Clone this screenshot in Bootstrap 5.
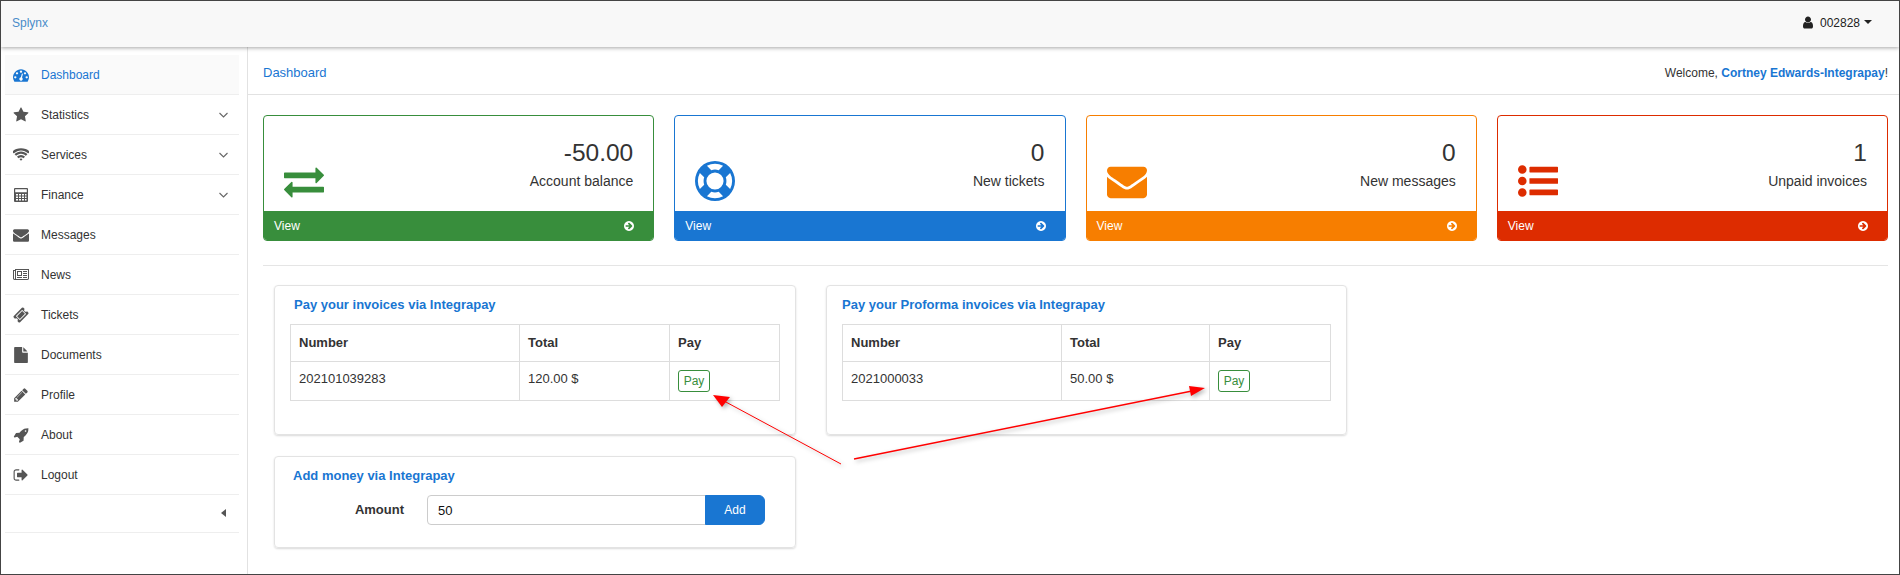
<!DOCTYPE html>
<html lang="en">
<head>
    <meta charset="UTF-8">
    <meta name="viewport" content="width=device-width, initial-scale=1.0">
    <title>Splynx</title>
    <link href="https://cdn.jsdelivr.net/npm/bootstrap@5.3.2/dist/css/bootstrap.min.css" rel="stylesheet">
    <style>
        body {
            font-family: "Liberation Sans", Arial, sans-serif;
            font-size: 13px;
            color: #333;
            background: #fff;
            overflow: hidden;
        }
        a { text-decoration: none; }
        .page-frame {
            position: relative;
            height: 575px;
            border: 1px solid #444;
            overflow: hidden;
        }
        .top-bar {
            height: 46px;
            background: #f8f8f8;
            box-shadow: 0 1px 4px rgba(0,0,0,.35);
            padding: 0 27px 3px 11px;
            position: relative;
            z-index: 2;
        }
        .brand-link { color: #4a8cc9; font-size: 12px; }
        .user-menu { color: #222; font-size: 12px; gap: 7px; }
        .user-menu svg { width: 11px; height: 13px; fill: #222; }
        .user-caret {
            border-left: 4px solid transparent;
            border-right: 4px solid transparent;
            border-top: 4px solid #222;
            margin-left: -3px;
            margin-top: -1px;
        }
        .side-bar {
            width: 247px;
            flex: none;
            border-right: 1px solid #e2e2e2;
            padding: 8px 8px 0 4px;
        }
        .side-link {
            height: 40px;
            border-bottom: 1px solid #eee;
            color: #333;
            font-size: 12px;
            padding: 1px 0 0 8px;
        }
        .side-link.is-active { background: #fafafa; color: #1976d2; }
        .side-link .side-icon { width: 16px; height: 16px; fill: #555; margin-right: 12px; flex: none; }
        .side-link.is-active .side-icon { fill: #1976d2; }
        .side-chevron { width: 9px; height: 6px; margin-left: auto; margin-right: 11px; fill: none; stroke: #666; stroke-width: 1.1; }
        .side-collapse { height: 38px; border-bottom: 1px solid #eee; padding-right: 13px; }
        .side-collapse-caret {
            border-top: 4px solid transparent;
            border-bottom: 4px solid transparent;
            border-right: 5px solid #555;
            margin-top: -1px;
        }
        .main-area { flex: 1; min-width: 0; }
        .crumb-bar {
            height: 48px;
            border-bottom: 1px solid #e2e2e2;
            padding: 4px 11px 0 15px;
        }
        .crumb-link { color: #1976d2; font-size: 13px; }
        .welcome-text { font-size: 12px; color: #333; }
        .welcome-text a { color: #1976d2; font-weight: 700; }
        .main-body { padding: 20px 11px 0 15px; }
        .stat-grid { display: grid; grid-template-columns: repeat(4, 1fr); gap: 20px; }
        .stat-box { height: 126px; border-radius: 4px; border: 1px solid; overflow: hidden; }
        .stat-top { height: 95px; padding: 0 20px 10px 20px; }
        .stat-icon { width: 40px; height: 40px; fill: currentColor; }
        .stat-number { font-size: 24.5px; line-height: 28px; color: #333; }
        .stat-label { font-size: 14px; line-height: 20px; margin-top: 4px; color: #333; margin-bottom: 10px; }
        .stat-foot { height: 30px; color: #fff; padding: 0 20px 0 11px; font-size: 12px; margin: 0 -1px; }
        .stat-foot svg { width: 10px; height: 12px; fill: #fff; }
        .stat-green { border-color: #388e3c; color: #388e3c; }
        .stat-green .stat-foot { background: #388e3c; }
        .stat-blue { border-color: #1976d2; color: #1976d2; }
        .stat-blue .stat-foot { background: #1976d2; }
        .stat-orange { border-color: #f77e00; color: #f77e00; }
        .stat-orange .stat-foot { background: #f77e00; }
        .stat-red { border-color: #dd2c00; color: #dd2c00; }
        .stat-red .stat-foot { background: #dd2c00; }
        .divider-line { height: 1px; background: #e5e5e5; margin: 24px 0 19px; }
        .panel-row { padding-left: 11px; gap: 30px; }
        .panel-col-left { width: 522px; flex: none; gap: 21px; }
        .panel-col-right { width: 521px; flex: none; }
        .pay-panel {
            border: 1px solid #e3e3e3;
            border-radius: 4px;
            box-shadow: 0 1px 2px rgba(0,0,0,.15);
            padding: 10px 15px 0;
        }
        .pay-panel.tall-panel { height: 150px; }
        .pay-panel.short-panel { height: 92px; }
        .panel-title { color: #1976d2; font-weight: 700; font-size: 13px; line-height: 18px; margin-bottom: 10px; }
        .panel-title.title-inset { padding-left: 4px; }
        .panel-title.title-inset-small { padding-left: 3px; }
        .pay-table { table-layout: fixed; margin: 0; color: #333; font-size: 13px; --bs-table-border-color: #ddd; border-color: #ddd; }
        .pay-table th { font-weight: 700; padding: 9px 8px; height: 36px; line-height: 18px; }
        .pay-table td { padding: 8px; height: 39px; line-height: 18px; }
        .invoice-table { width: 490px; }
        .invoice-table th:nth-child(1) { width: 229px; }
        .invoice-table th:nth-child(2) { width: 150px; }
        .proforma-table { width: 489px; }
        .proforma-table th:nth-child(1) { width: 219px; }
        .proforma-table th:nth-child(2) { width: 148px; }
        .btn-pay {
            --bs-btn-color: #388e3c;
            --bs-btn-border-color: #388e3c;
            --bs-btn-hover-color: #fff;
            --bs-btn-hover-bg: #388e3c;
            --bs-btn-padding-x: 0;
            --bs-btn-padding-y: 2px;
            --bs-btn-font-size: 12px;
            --bs-btn-border-radius: 3px;
            --bs-btn-line-height: 16px;
            display: block;
            width: 32px;
        }
        .amount-label { width: 114px; text-align: right; font-weight: 700; font-size: 13px; color: #333; margin-right: 23px; }
        .amount-group { width: 338px; }
        .amount-group .form-control { height: 30px; font-size: 13px; color: #111; border-color: #ccc; padding: 0 10px; border-radius: 4px 0 0 4px; }
        .btn-add {
            --bs-btn-color: #fff;
            --bs-btn-bg: #1976d2;
            --bs-btn-border-color: #1976d2;
            --bs-btn-hover-color: #fff;
            --bs-btn-hover-bg: #1565c0;
            --bs-btn-font-size: 12px;
            width: 60px;
            height: 30px;
            padding: 0;
        }
        .arrow-layer {
            position: absolute;
            left: -1px;
            top: -1px;
            width: 1900px;
            height: 575px;
            z-index: 5;
            pointer-events: none;
            filter: drop-shadow(2px 2px 2px rgba(0,0,0,.3));
        }
    </style>
</head>
<body>
    <div class="page-frame d-flex flex-column">
        <div class="top-bar d-flex align-items-center justify-content-between">
            <a class="brand-link" href="#">Splynx</a>
            <a class="user-menu d-flex align-items-center" href="#">
                <svg viewBox="128 128 1408 1536"><path d="M1536 1399q0 109-62.5 187t-150.5 78h-854q-88 0-150.5-78t-62.5-187q0-85 8.5-160.5t31.5-152 58.5-131 94-89 134.5-34.5q131 128 313 128t313-128q76 0 134.5 34.5t94 89 58.5 131 31.5 152 8.5 160.5zm-256-887q0 159-112.5 271.5t-271.5 112.5-271.5-112.5-112.5-271.5 112.5-271.5 271.5-112.5 271.5 112.5 112.5 271.5z"/></svg>
                <span>002828</span>
                <span class="user-caret"></span>
            </a>
        </div>

        <div class="d-flex flex-grow-1">
            <div class="side-bar">
                <a class="side-link is-active d-flex align-items-center" href="#">
                    <svg class="side-icon" viewBox="0 0 1792 1792"><path d="M384 1152q0-53-37.5-90.5t-90.5-37.5-90.5 37.5-37.5 90.5 37.5 90.5 90.5 37.5 90.5-37.5 37.5-90.5zm192-448q0-53-37.5-90.5t-90.5-37.5-90.5 37.5-37.5 90.5 37.5 90.5 90.5 37.5 90.5-37.5 37.5-90.5zm428 481l101-382q6-26-7.5-48.5t-38.5-29.5-48 6.5-30 39.5l-101 382q-60 5-107 43.5t-63 98.5q-20 77 20 146t117 89 146-20 89-117q16-60-6-117t-72-91zm660-33q0-53-37.5-90.5t-90.5-37.5-90.5 37.5-37.5 90.5 37.5 90.5 90.5 37.5 90.5-37.5 37.5-90.5zm-640-640q0-53-37.5-90.5t-90.5-37.5-90.5 37.5-37.5 90.5 37.5 90.5 90.5 37.5 90.5-37.5 37.5-90.5zm448 192q0-53-37.5-90.5t-90.5-37.5-90.5 37.5-37.5 90.5 37.5 90.5 90.5 37.5 90.5-37.5 37.5-90.5zm320 448q0 261-141 483-19 29-54 29h-1402q-35 0-54-29-141-221-141-483 0-182 71-348t191-286 286-191 348-71 348 71 286 191 191 286 71 348z"/></svg>
                    Dashboard
                </a>
                <a class="side-link d-flex align-items-center" href="#">
                    <svg class="side-icon" viewBox="0 0 1792 1792"><path d="M1728 647q0 22-26 48l-363 354 86 500q1 7 1 20 0 21-10.5 35.5t-30.5 14.5q-19 0-40-12l-449-236-449 236q-22 12-40 12-21 0-31.5-14.5t-10.5-35.5q0-6 2-20l86-500-364-354q-25-27-25-48 0-37 56-46l502-73 225-455q19-41 49-41t49 41l225 455 502 73q56 9 56 46z"/></svg>
                    Statistics
                    <svg class="side-chevron" viewBox="0 0 9 6"><path d="M.5 1l4 4 4-4"/></svg>
                </a>
                <a class="side-link d-flex align-items-center" href="#">
                    <svg class="side-icon" viewBox="0 0 1792 1792"><path d="M896 1523q-20 0-93-73.5t-73-93.5q0-32 62.5-54t103.5-22 103.5 22 62.5 54q0 20-73 93.5t-93 73.5zm270-271q-2 0-40-25t-101.5-50-128.5-25-128.5 25-101 50-40.5 25q-18 0-93.5-75t-75.5-93q0-13 10-23 78-77 196-121t233-44 233 44 196 121q10 10 10 23 0 18-75.5 93t-93.5 75zm273-272q-11 0-23-8-136-105-252-154.5t-268-49.5q-85 0-170.5 22t-149 53-113.5 62-79 53-31 22q-17 0-92-75t-75-93q0-12 10-22 132-132 320-205t380-73 380 73 320 205q10 10 10 22 0 18-75 93t-92 75zm271-271q-11 0-22-9-179-157-371.5-236.5t-420.5-79.5-420.5 79.5-371.5 236.5q-11 9-22 9-17 0-92.5-75t-75.5-93q0-13 10-23 187-186 445-288t527-102 527 102 445 288q10 10 10 23 0 18-75.5 93t-92.5 75z"/></svg>
                    Services
                    <svg class="side-chevron" viewBox="0 0 9 6"><path d="M.5 1l4 4 4-4"/></svg>
                </a>
                <a class="side-link d-flex align-items-center" href="#">
                    <svg class="side-icon" viewBox="0 0 16 16"><path fill-rule="evenodd" d="M2 1h12a1 1 0 0 1 1 1v12a1 1 0 0 1-1 1H2a1 1 0 0 1-1-1V2a1 1 0 0 1 1-1zm.2 1.2v3h11.600v-3H2.200zM3 7v1.600h2V7H3zm3 0v1.600h2V7H6zm3 0v1.600h2V7H9zm3 0v1.600h1.500V7H12zM3 9.500v1.600h2V9.500H3zm3 0v1.600h2V9.500H6zm3 0v1.600h2V9.500H9zm3 0v1.600h1.500V9.500H12zM3 12v1.600h2V12H3zm3 0v1.600h2V12H6zm3 0v1.600h2V12H9zm3 0v1.600h1.500V12H12z"/></svg>
                    Finance
                    <svg class="side-chevron" viewBox="0 0 9 6"><path d="M.5 1l4 4 4-4"/></svg>
                </a>
                <a class="side-link d-flex align-items-center" href="#">
                    <svg class="side-icon" viewBox="0 0 1792 1792"><path d="M1792 710v794q0 66-47 113t-113 47h-1472q-66 0-113-47t-47-113v-794q44 49 101 87 362 246 497 345 57 42 92.5 65.5t94.5 48 110 24.5h2q51 0 110-24.5t94.5-48 92.5-65.5q170-123 498-345 57-39 100-87zm0-294q0 79-49 151t-122 123q-376 261-468 325-10 7-42.5 30.5t-54 38-52 32.5-57.5 27-50 9h-2q-23 0-50-9t-57.5-27-52-32.5-54-38-42.5-30.5q-91-64-262-182.5t-205-142.5q-62-42-117-115.5t-55-136.5q0-78 41.5-130t118.5-52h1472q65 0 112.5 47t47.5 113z"/></svg>
                    Messages
                </a>
                <a class="side-link d-flex align-items-center" href="#">
                    <svg class="side-icon" viewBox="0 0 2048 1792"><path d="M1024 512h-384v384h384v-384zm128 640v128h-640v-128h640zm0-768v640h-640v-640h640zm640 768v128h-512v-128h512zm0-256v128h-512v-128h512zm0-256v128h-512v-128h512zm0-256v128h-512v-128h512zm-1536 960v-960h-128v960q0 26 19 45t45 19 45-19 19-45zm1664 0v-1088h-1536v1088q0 33-11 64h1451q40 0 68-28t28-36zm128-1216v1216q0 80-56 136t-136 56h-1664q-80 0-136-56t-56-136v-1088h256v-128h1792z"/></svg>
                    News
                </a>
                <a class="side-link d-flex align-items-center" href="#">
                    <svg class="side-icon" viewBox="0 0 1792 1792"><path d="M1024 452l316 316-572 572-316-316zm-211 979l618-618q19-19 19-45t-19-45l-362-362q-18-18-45-18t-45 18l-618 618q-19 19-19 45t19 45l362 362q18 18 45 18t45-18zm889-637l-907 908q-37 37-90.500 37t-90.500-37l-126-126q56-56 56-136t-56-136-136-56-136 56l-125-126q-37-37-37-90.500t37-90.500l907-906q37-37 90.500-37t90.500 37l125 125q-56 56-56 136t56 136 136 56 136-56l126 125q37 37 37 90.500t-37 90.500z"/></svg>
                    Tickets
                </a>
                <a class="side-link d-flex align-items-center" href="#">
                    <svg class="side-icon" viewBox="0 0 1792 1792"><path d="M1152 512v-472q22 14 36 28l408 408q14 14 28 36h-472zm-128 32q0 40 28 68t68 28h544v1056q0 40-28 68t-68 28h-1344q-40 0-68-28t-28-68v-1600q0-40 28-68t68-28h800v544z"/></svg>
                    Documents
                </a>
                <a class="side-link d-flex align-items-center" href="#">
                    <svg class="side-icon" viewBox="0 0 1792 1792"><path d="M491 1536l91-91-235-235-91 91v107h128v128h107zm523-928q0-22-22-22-10 0-17 7l-542 542q-7 7-7 17 0 22 22 22 10 0 17-7l542-542q7-7 7-17zm-54-192l416 416-832 832h-416v-416zm683 96q0 53-37 90l-166 166-416-416 166-165q36-38 90-38 53 0 91 38l235 234q37 39 37 91z"/></svg>
                    Profile
                </a>
                <a class="side-link d-flex align-items-center" href="#">
                    <svg class="side-icon" viewBox="0 0 1792 1792"><path d="M1504 448q0-40-28-68t-68-28-68 28-28 68 28 68 68 28 68-28 28-68zm224-288q0 249-75.500 430.500t-253.500 360.500q-81 80-195 176l-20 379q-2 16-16 26l-384 224q-7 4-16 4-12 0-23-9l-64-64q-13-14-8-32l85-276-281-281-276 85q-3 1-9 1-14 0-23-9l-64-64q-17-19-5-39l224-384q10-14 26-16l379-20q96-114 176-195 188-187 358-258t431-71q14 0 24 9.500t10 22.500z"/></svg>
                    About
                </a>
                <a class="side-link d-flex align-items-center" href="#">
                    <svg class="side-icon" viewBox="0 0 1792 1792"><path d="M704 1440q0 4 1 20t.5 26.500-3 23.500-10 19.500-20.500 6.500h-320q-119 0-203.500-84.500t-84.500-203.500v-704q0-119 84.500-203.500t203.500-84.500h320q13 0 22.500 9.500t9.500 22.500q0 4 1 20t.5 26.500-3 23.500-10 19.500-20.500 6.500h-320q-66 0-113 47t-47 113v704q0 66 47 113t113 47h312l11.500 1 11.500 3 8 5.500 7 9 2 13.500zm928-544q0 26-19 45l-544 544q-19 19-45 19t-45-19-19-45v-288h-448q-26 0-45-19t-19-45v-384q0-26 19-45t45-19h448v-288q0-26 19-45t45-19 45 19l544 544q19 19 19 45z"/></svg>
                    Logout
                </a>
                <div class="side-collapse d-flex align-items-center justify-content-end">
                    <span class="side-collapse-caret"></span>
                </div>
            </div>

            <div class="main-area">
                <div class="crumb-bar d-flex align-items-center justify-content-between">
                    <a class="crumb-link" href="#">Dashboard</a>
                    <div class="welcome-text">Welcome, <a href="#">Cortney Edwards-Integrapay</a>!</div>
                </div>

                <div class="main-body">
                    <div class="stat-grid">
                        <div class="stat-box stat-green">
                            <div class="stat-top d-flex align-items-end justify-content-between">
                                <svg class="stat-icon" viewBox="0 0 1792 1792"><path d="M1792 1184v192q0 13-9.500 22.500t-22.500 9.500h-1376v192q0 13-9.500 22.500t-22.500 9.500q-12 0-24-10l-319-320q-9-9-9-22 0-14 9-23l320-320q9-9 23-9 13 0 22.500 9.500t9.500 22.500v192h1376q13 0 22.500 9.500t9.500 22.500zm0-544q0 14-9 23l-320 320q-9 9-23 9-13 0-22.500-9.500t-9.500-22.500v-192h-1376q-13 0-22.500-9.500t-9.500-22.500v-192q0-13 9.500-22.500t22.500-9.500h1376v-192q0-14 9-23t23-9q12 0 24 10l319 319q9 9 9 23z"/></svg>
                                <div class="text-end">
                                    <div class="stat-number">-50.00</div>
                                    <div class="stat-label">Account balance</div>
                                </div>
                            </div>
                            <a class="stat-foot d-flex align-items-center justify-content-between text-white" href="#">
                                <span>View</span>
                                <svg viewBox="0 0 1536 1792"><path d="M1285 896q0-27-18-45l-91-91-362-362q-18-18-45-18t-45 18l-91 91q-18 18-18 45t18 45l189 189h-502q-26 0-45 19t-19 45v128q0 26 19 45t45 19h502l-189 189q-19 19-19 45t19 45l91 91q18 18 45 18t45-18l362-362 91-91q18-18 18-45zm251 0q0 209-103 385.500t-279.500 279.500-385.500 103-385.500-103-279.500-279.500-103-385.500 103-385.500 279.500-279.500 385.500-103 385.500 103 279.500 279.500 103 385.500z"/></svg>
                            </a>
                        </div>
                        <div class="stat-box stat-blue">
                            <div class="stat-top d-flex align-items-end justify-content-between">
                                <svg class="stat-icon" viewBox="0 0 1792 1792"><path d="M896 0q182 0 348 71t286 191 191 286 71 348-71 348-191 286-286 191-348 71-348-71-286-191-191-286-71-348 71-348 191-286 286-191 348-71zm0 128q-190 0-361 90l194 194q82-28 167-28t167 28l194-194q-171-90-361-90zm-678 1129l194-194q-28-82-28-167t28-167l-194-194q-90 171-90 361t90 361zm678 407q190 0 361-90l-194-194q-82 28-167 28t-167-28l-194 194q171 90 361 90zm0-384q159 0 271.500-112.500t112.500-271.500-112.500-271.500-271.500-112.500-271.500 112.500-112.500 271.500 112.500 271.500 271.500 112.500zm484-217l194 194q90-171 90-361t-90-361l-194 194q28 82 28 167t-28 167z"/></svg>
                                <div class="text-end">
                                    <div class="stat-number">0</div>
                                    <div class="stat-label">New tickets</div>
                                </div>
                            </div>
                            <a class="stat-foot d-flex align-items-center justify-content-between text-white" href="#">
                                <span>View</span>
                                <svg viewBox="0 0 1536 1792"><path d="M1285 896q0-27-18-45l-91-91-362-362q-18-18-45-18t-45 18l-91 91q-18 18-18 45t18 45l189 189h-502q-26 0-45 19t-19 45v128q0 26 19 45t45 19h502l-189 189q-19 19-19 45t19 45l91 91q18 18 45 18t45-18l362-362 91-91q18-18 18-45zm251 0q0 209-103 385.500t-279.500 279.500-385.500 103-385.500-103-279.500-279.500-103-385.500 103-385.500 279.500-279.500 385.500-103 385.500 103 279.500 279.500 103 385.500z"/></svg>
                            </a>
                        </div>
                        <div class="stat-box stat-orange">
                            <div class="stat-top d-flex align-items-end justify-content-between">
                                <svg class="stat-icon" viewBox="0 0 1792 1792"><path d="M1792 710v794q0 66-47 113t-113 47h-1472q-66 0-113-47t-47-113v-794q44 49 101 87 362 246 497 345 57 42 92.500 65.500t94.500 48 110 24.500h2q51 0 110-24.500t94.500-48 92.500-65.500q170-123 498-345 57-39 100-87zm0-294q0 79-49 151t-122 123q-376 261-468 325-10 7-42.500 30.500t-54 38-52 32.500-57.500 27-50 9h-2q-23 0-50-9t-57.500-27-52-32.500-54-38-42.500-30.500q-91-64-262-182.500t-205-142.500q-62-42-117-115.500t-55-136.500q0-78 41.500-130t118.500-52h1472q65 0 112.500 47t47.500 113z"/></svg>
                                <div class="text-end">
                                    <div class="stat-number">0</div>
                                    <div class="stat-label">New messages</div>
                                </div>
                            </div>
                            <a class="stat-foot d-flex align-items-center justify-content-between text-white" href="#">
                                <span>View</span>
                                <svg viewBox="0 0 1536 1792"><path d="M1285 896q0-27-18-45l-91-91-362-362q-18-18-45-18t-45 18l-91 91q-18 18-18 45t18 45l189 189h-502q-26 0-45 19t-19 45v128q0 26 19 45t45 19h502l-189 189q-19 19-19 45t19 45l91 91q18 18 45 18t45-18l362-362 91-91q18-18 18-45zm251 0q0 209-103 385.500t-279.500 279.500-385.500 103-385.500-103-279.500-279.500-103-385.500 103-385.500 279.500-279.500 385.500-103 385.500 103 279.500 279.500 103 385.500z"/></svg>
                            </a>
                        </div>
                        <div class="stat-box stat-red">
                            <div class="stat-top d-flex align-items-end justify-content-between">
                                <svg class="stat-icon" viewBox="0 0 1792 1792"><path d="M384 1408q0 80-56 136t-136 56-136-56-56-136 56-136 136-56 136 56 56 136zm0-512q0 80-56 136t-136 56-136-56-56-136 56-136 136-56 136 56 56 136zm1408 416v192q0 13-9.500 22.500t-22.500 9.500h-1216q-13 0-22.500-9.500t-9.500-22.500v-192q0-13 9.500-22.500t22.500-9.500h1216q13 0 22.500 9.500t9.500 22.500zm-1408-928q0 80-56 136t-136 56-136-56-56-136 56-136 136-56 136 56 56 136zm1408 416v192q0 13-9.500 22.500t-22.500 9.500h-1216q-13 0-22.500-9.500t-9.500-22.500v-192q0-13 9.500-22.500t22.500-9.500h1216q13 0 22.500 9.500t9.500 22.500zm0-512v192q0 13-9.500 22.500t-22.500 9.500h-1216q-13 0-22.500-9.500t-9.500-22.500v-192q0-13 9.500-22.500t22.500-9.500h1216q13 0 22.500 9.500t9.500 22.500z"/></svg>
                                <div class="text-end">
                                    <div class="stat-number">1</div>
                                    <div class="stat-label">Unpaid invoices</div>
                                </div>
                            </div>
                            <a class="stat-foot d-flex align-items-center justify-content-between text-white" href="#">
                                <span>View</span>
                                <svg viewBox="0 0 1536 1792"><path d="M1285 896q0-27-18-45l-91-91-362-362q-18-18-45-18t-45 18l-91 91q-18 18-18 45t18 45l189 189h-502q-26 0-45 19t-19 45v128q0 26 19 45t45 19h502l-189 189q-19 19-19 45t19 45l91 91q18 18 45 18t45-18l362-362 91-91q18-18 18-45zm251 0q0 209-103 385.500t-279.500 279.500-385.500 103-385.500-103-279.500-279.500-103-385.500 103-385.500 279.500-279.500 385.500-103 385.500 103 279.500 279.500 103 385.500z"/></svg>
                            </a>
                        </div>
                    </div>

                    <div class="divider-line"></div>

                    <div class="panel-row d-flex align-items-start">
                        <div class="panel-col-left d-flex flex-column">
                            <div class="pay-panel tall-panel">
                                <div class="panel-title title-inset">Pay your invoices via Integrapay</div>
                                <table class="table table-bordered pay-table invoice-table">
                                    <thead><tr><th>Number</th><th>Total</th><th>Pay</th></tr></thead>
                                    <tbody><tr><td>202101039283</td><td>120.00 $</td><td><a class="btn btn-pay" href="#" role="button">Pay</a></td></tr></tbody>
                                </table>
                            </div>
                            <div class="pay-panel short-panel">
                                <div class="panel-title title-inset-small">Add money via Integrapay</div>
                                <div class="d-flex align-items-center">
                                    <div class="amount-label">Amount</div>
                                    <div class="input-group amount-group">
                                        <input class="form-control" type="text" value="50">
                                        <button class="btn btn-add" type="button">Add</button>
                                    </div>
                                </div>
                            </div>
                        </div>
                        <div class="panel-col-right">
                            <div class="pay-panel tall-panel">
                                <div class="panel-title">Pay your Proforma invoices via Integrapay</div>
                                <table class="table table-bordered pay-table proforma-table">
                                    <thead><tr><th>Number</th><th>Total</th><th>Pay</th></tr></thead>
                                    <tbody><tr><td>2021000033</td><td>50.00 $</td><td><a class="btn btn-pay" href="#" role="button">Pay</a></td></tr></tbody>
                                </table>
                            </div>
                        </div>
                    </div>
                </div>
            </div>
        </div>

        <!-- red annotation arrows drawn on top of the page -->
        <svg class="arrow-layer" viewBox="0 0 1900 575">
            <line x1="841" y1="464" x2="724" y2="401" stroke="#f00" stroke-width="1"/>
            <polygon points="713,395 730,397 722,407" fill="#f00"/>
            <line x1="854" y1="459" x2="1192" y2="391" stroke="#f00" stroke-width="1.300"/>
            <polygon points="1205,388 1189,386 1191,396" fill="#f00"/>
        </svg>
    </div>
    <script src="https://cdn.jsdelivr.net/npm/bootstrap@5.3.2/dist/js/bootstrap.bundle.min.js"></script>
</body>
</html>
